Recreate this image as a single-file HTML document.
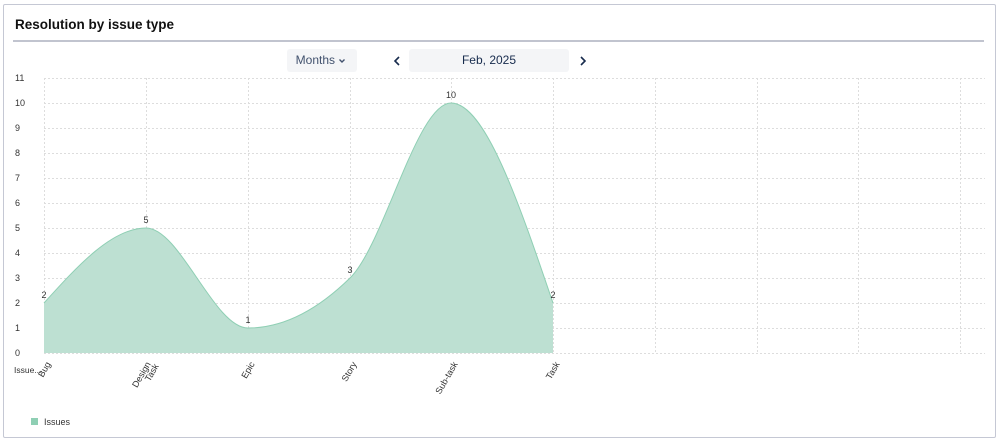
<!DOCTYPE html>
<html><head><meta charset="utf-8"><style>
body{margin:0;width:999px;height:444px;background:#fff;font-family:"Liberation Sans",sans-serif;overflow:hidden;position:relative}
.card{position:absolute;left:3px;top:4px;width:991px;height:432px;border:1px solid #c5c8d4;border-radius:2px}
.title{position:absolute;left:15px;top:17px;font-size:13.5px;font-weight:bold;color:#111}
.hr{position:absolute;left:13px;top:40px;width:971px;height:2px;background:#c1c4cf}
.btn{position:absolute;top:49px;height:23px;background:#f4f5f7;border-radius:3px;font-size:12px;line-height:23px;text-align:center;color:#172b4d}
</style></head><body>
<div class="card"></div>
<div class="title">Resolution by issue type</div>
<div class="hr"></div>
<div class="btn" style="left:287px;width:70px;color:#42526e">Months &nbsp;&nbsp;&nbsp;</div>
<div class="btn" style="left:409px;width:160px">Feb, 2025</div>
<svg width="999" height="444" style="position:absolute;left:0;top:0" font-family="Liberation Sans, sans-serif">
<path d="M399 57l-4 4 4 4M581 57l4 4-4 4" stroke="#172b4d" stroke-width="1.6" fill="none"/>
<path d="M339.5 59.5l2.5 2.5 2.5-2.5" stroke="#42526e" stroke-width="1.4" fill="none"/>
<g stroke="#ddd" stroke-width="1" stroke-dasharray="2,2">
<line x1="44" y1="78.5" x2="985" y2="78.5"/><line x1="44" y1="103.5" x2="985" y2="103.5"/><line x1="44" y1="128.5" x2="985" y2="128.5"/><line x1="44" y1="153.5" x2="985" y2="153.5"/><line x1="44" y1="178.5" x2="985" y2="178.5"/><line x1="44" y1="203.5" x2="985" y2="203.5"/><line x1="44" y1="228.5" x2="985" y2="228.5"/><line x1="44" y1="253.5" x2="985" y2="253.5"/><line x1="44" y1="278.5" x2="985" y2="278.5"/><line x1="44" y1="303.5" x2="985" y2="303.5"/><line x1="44" y1="328.5" x2="985" y2="328.5"/><line x1="44" y1="353.5" x2="985" y2="353.5"/>
<line x1="44.5" y1="78" x2="44.5" y2="353"/><line x1="146.5" y1="78" x2="146.5" y2="353"/><line x1="248.5" y1="78" x2="248.5" y2="353"/><line x1="350.5" y1="78" x2="350.5" y2="353"/><line x1="451.5" y1="78" x2="451.5" y2="353"/><line x1="553.5" y1="78" x2="553.5" y2="353"/><line x1="655.5" y1="78" x2="655.5" y2="353"/><line x1="757.5" y1="78" x2="757.5" y2="353"/><line x1="858.5" y1="78" x2="858.5" y2="353"/><line x1="960.5" y1="78" x2="960.5" y2="353"/>
</g>
<path d="M44 303C78 265.5 112 228 146 228C180 228 214 328 248 328C282 328 316 311.3 350 278C384 244.7 417 103 451 103C485 103 519 203 553 303L553 353L44 353Z" fill="#bde0d2" stroke="none"/>
<path d="M44 303C78 265.5 112 228 146 228C180 228 214 328 248 328C282 328 316 311.3 350 278C384 244.7 417 103 451 103C485 103 519 203 553 303" fill="none" stroke="#8fcfb4" stroke-width="1"/>
<g font-size="9" fill="#333">
<text x="15" y="81">11</text><text x="15" y="106">10</text><text x="15" y="131">9</text><text x="15" y="156">8</text><text x="15" y="181">7</text><text x="15" y="206">6</text><text x="15" y="231">5</text><text x="15" y="256">4</text><text x="15" y="281">3</text><text x="15" y="306">2</text><text x="15" y="331">1</text><text x="15" y="356">0</text>
<g text-anchor="middle"><text x="44" y="298">2</text><text x="146" y="223">5</text><text x="248" y="323">1</text><text x="350" y="273">3</text><text x="451" y="98">10</text><text x="553" y="298">2</text></g>
<text x="14" y="373" font-size="8.5">Issue...</text>
<g text-anchor="end">
<text transform="translate(51,364) rotate(-60)">Bug</text>
<text transform="translate(151,364) rotate(-60)">Design</text>
<text transform="translate(159,366) rotate(-60)">Task</text>
<text transform="translate(255,364) rotate(-60)">Epic</text>
<text transform="translate(357,364) rotate(-60)">Story</text>
<text transform="translate(458,364) rotate(-60)">Sub-task</text>
<text transform="translate(560,364) rotate(-60)">Task</text>
</g>
<rect x="31" y="418" width="7" height="7" fill="#8fcfb4"/>
<text x="44" y="425">Issues</text>
</g>
</svg>
</body></html>
